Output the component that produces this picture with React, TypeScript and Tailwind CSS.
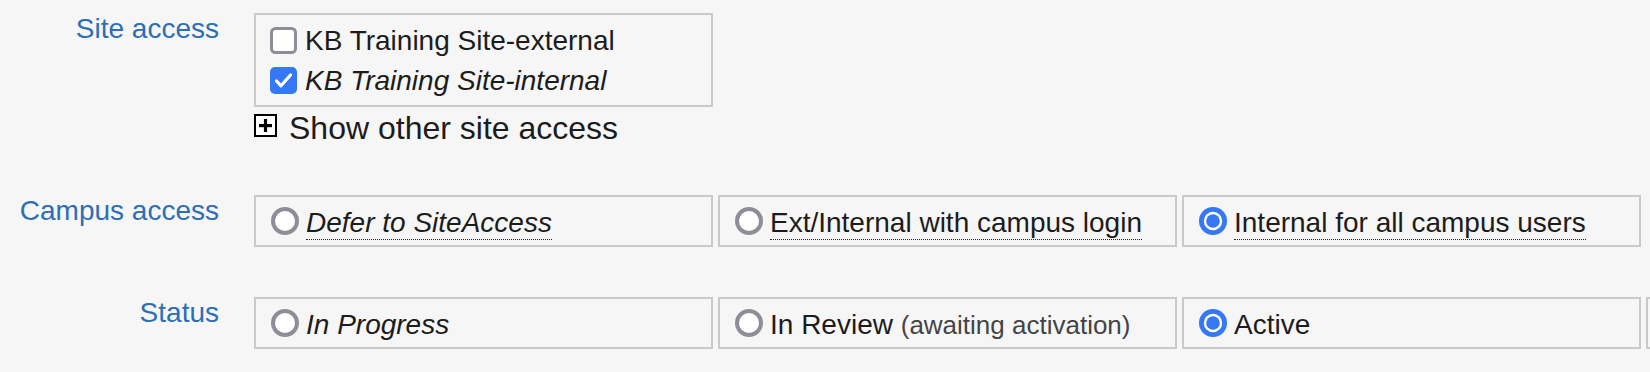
import React from "react";

const BLUE = "#3478f6";
const GRAY = "#8e8e99";

function Checkbox({ checked }: { checked?: boolean }) {
  return (
    <svg width="27" height="27" viewBox="0 0 27 27" className="shrink-0">
      {checked ? (
        <>
          <rect x="0" y="0" width="27" height="27" rx="5" fill={BLUE} />
          <path d="M6.5 14 L11 18.8 L20.5 8" fill="none" stroke="#fff" strokeWidth="3.2" strokeLinecap="round" strokeLinejoin="round" />
        </>
      ) : (
        <rect x="1.5" y="1.5" width="24" height="24" rx="4" fill="#fff" stroke={GRAY} strokeWidth="3" />
      )}
    </svg>
  );
}

function Radio({ checked }: { checked?: boolean }) {
  return (
    <svg width="28" height="28" viewBox="0 0 28 28" className="shrink-0">
      {checked ? (
        <>
          <circle cx="14" cy="14" r="14" fill={BLUE} />
          <circle cx="14" cy="14" r="9.2" fill="#fff" />
          <circle cx="14" cy="14" r="6.8" fill={BLUE} />
        </>
      ) : (
        <circle cx="14" cy="14" r="12" fill="#fff" stroke={GRAY} strokeWidth="4" />
      )}
    </svg>
  );
}

function PlusBox() {
  return (
    <svg width="23" height="23" viewBox="0 0 23 23" className="mt-[4px] shrink-0">
      <rect x="1" y="1" width="21" height="21" fill="#fff" stroke="#000" strokeWidth="2" />
      <rect x="5" y="10" width="13" height="3.2" fill="#000" />
      <rect x="9.9" y="5" width="3.2" height="13" fill="#000" />
    </svg>
  );
}

function Label({ children }: { children: React.ReactNode }) {
  return <div className="w-[219px] shrink-0 text-right text-[28px] leading-[32px] text-[#2c6fb7]">{children}</div>;
}

function Choice({ checked, children }: { checked?: boolean; children?: React.ReactNode }) {
  return (
    <div className="flex h-[52px] w-[459px] shrink-0 items-center gap-[7px] border-2 border-[#c9c9c9] pl-[15px]">
      {children !== undefined && <Radio checked={checked} />}
      <div className="pt-[3px] text-[28px] leading-[32px] text-[#1c1c1c]">{children}</div>
    </div>
  );
}

function Dotted({ children, italic }: { children: React.ReactNode; italic?: boolean }) {
  return <span className={`border-b border-dotted border-[#222] pb-[1px] ${italic ? "italic" : ""}`}>{children}</span>;
}

export default function App() {
  return (
    <div className="h-[372px] w-[1650px] overflow-hidden bg-[#f6f6f6] pt-[13px] font-['Liberation_Sans',Arial,sans-serif]">
      {/* Site access */}
      <div className="flex items-start">
        <Label>Site access</Label>
        <div className="ml-[35px]">
          <div className="w-[459px] border-2 border-[#c9c9c9] py-[5px] pl-[14px]">
            <div className="flex h-[40px] items-center gap-[8px]">
              <Checkbox />
              <span className="pt-[2px] text-[28px] leading-[32px] text-[#1c1c1c]">KB Training Site-external</span>
            </div>
            <div className="flex h-[40px] items-center gap-[8px]">
              <Checkbox checked />
              <span className="pt-[2px] text-[28px] leading-[32px] italic text-[#1c1c1c]">KB Training Site-internal</span>
            </div>
          </div>
          <div className="mt-[3px] flex items-start gap-[12px]">
            <PlusBox />
            <span className="text-[32px] leading-[36px] text-[#1c1c1c]">Show other site access</span>
          </div>
        </div>
      </div>

      {/* Campus access */}
      <div className="mt-[49px] flex items-start">
        <Label>Campus access</Label>
        <div className="ml-[35px] flex gap-[5px]">
          <Choice>
            <Dotted italic>Defer to SiteAccess</Dotted>
          </Choice>
          <Choice>
            <Dotted>Ext/Internal with campus login</Dotted>
          </Choice>
          <Choice checked>
            <Dotted>Internal for all campus users</Dotted>
          </Choice>
        </div>
      </div>

      {/* Status */}
      <div className="mt-[50px] flex items-start">
        <Label>Status</Label>
        <div className="ml-[35px] flex gap-[5px]">
          <Choice>
            <span className="italic">In Progress</span>
          </Choice>
          <Choice>
            In Review <span className="text-[26px] text-[#444]">(awaiting activation)</span>
          </Choice>
          <Choice checked>Active</Choice>
          <Choice />
        </div>
      </div>
    </div>
  );
}
